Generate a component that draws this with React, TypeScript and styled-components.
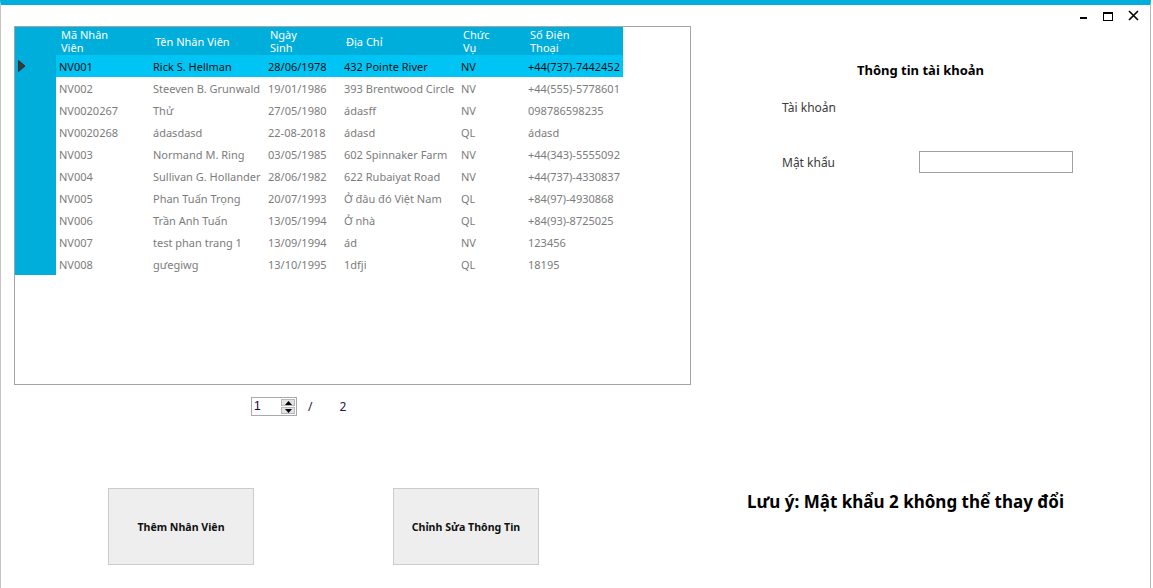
import { Fragment } from 'react'
import styled, { createGlobalStyle } from 'styled-components'

const GlobalStyle = createGlobalStyle`
  html, body {
    margin: 0;
    padding: 0;
    background: #fff;
  }
  body {
    font-family: "Noto Sans", "DejaVu Sans", sans-serif;
  }
`

const BLUE = '#00aedb'
const SELECTED = '#00c5f4'

const Window = styled.div`
  width: 1151px;
  height: 588px;
  box-sizing: border-box;
  border-top: 5px solid ${BLUE};
  border-left: 1px solid #c4c4c4;
  border-right: 1px solid #b4b4b4;
  display: flex;
  background: #fff;
`

const LeftPane = styled.div`
  width: 690px;
  box-sizing: border-box;
  padding-left: 13px;
  display: flex;
  flex-direction: column;
`

const GridBox = styled.div`
  margin-top: 21px;
  width: 677px;
  height: 359px;
  box-sizing: border-box;
  border: 1px solid #a5a5a5;
  background: #fff;
`

const Table = styled.div`
  display: grid;
  width: 608px;
  grid-template-columns: 41px 94px 115px 76px 117px 67px 98px;
  grid-template-rows: 28px;
  grid-auto-rows: 22px;
`

const HeadCell = styled.div`
  background: ${BLUE};
  color: #fff;
  font-size: 11px;
  line-height: 13px;
  padding-left: 5px;
  display: flex;
  align-items: center;
  white-space: nowrap;
`

const RowHead = styled.div`
  background: ${BLUE};
  display: flex;
  align-items: center;
  padding-left: 3px;
`

const Cell = styled.div<{ $selected?: boolean }>`
  background: ${(p) => (p.$selected ? SELECTED : '#fff')};
  color: ${(p) => (p.$selected ? '#111' : '#7c7c7c')};
  font-size: 11px;
  padding-left: 3px;
  display: flex;
  align-items: center;
  white-space: nowrap;
  overflow: hidden;
`

const Pager = styled.div`
  margin-top: 12px;
  margin-left: 237px;
  display: flex;
  align-items: center;
  height: 19px;
`

const SpinBox = styled.div`
  width: 46px;
  height: 19px;
  box-sizing: border-box;
  border: 1px solid #a8a8b0;
  display: flex;
  background: #fff;
`

const SpinValue = styled.div`
  flex: 1;
  font-family: "Liberation Sans", Arial, sans-serif;
  font-size: 12px;
  line-height: 17px;
  padding-left: 2px;
  color: #200030;
`

const SpinButtons = styled.div`
  width: 15px;
  display: flex;
  flex-direction: column;
  gap: 1px;
  padding: 1px 1px 1px 0;
  box-sizing: border-box;
`

const SpinButton = styled.div`
  flex: 1;
  background: #e2e2e2;
  border: 1px solid #b8b8b8;
  display: flex;
  align-items: center;
  justify-content: center;
`

const PagerText = styled.span<{ $gap: number }>`
  margin-left: ${(p) => p.$gap}px;
  font-size: 12px;
  color: #1a1a40;
`

const ButtonRow = styled.div`
  margin-top: 72px;
  margin-left: 94px;
  display: flex;
  gap: 139px;
`

const ActionButton = styled.button`
  width: 146px;
  height: 77px;
  box-sizing: border-box;
  border: 1px solid #cccccc;
  background: #eeeeee;
  font-family: "Noto Sans", "DejaVu Sans", sans-serif;
  font-weight: 700;
  font-size: 10.6px;
  color: #111;
  padding: 0;
`

const RightPane = styled.div`
  width: 459px;
  display: flex;
  flex-direction: column;
`

const Controls = styled.div`
  height: 22px;
  display: flex;
  justify-content: flex-end;
  padding-right: 4px;
`

const ControlButton = styled.div`
  width: 25px;
  height: 22px;
`

const Title = styled.div`
  margin-top: 35px;
  text-align: center;
  font-size: 13px;
  font-weight: 700;
  line-height: 16px;
  color: #000;
`

const FormRow = styled.div<{ $top: number }>`
  margin-top: ${(p) => p.$top}px;
  padding-left: 91px;
  height: 22px;
  display: flex;
  align-items: center;
`

const Label = styled.div`
  width: 137px;
  font-size: 12px;
  color: #3a3a3a;
`

const Input = styled.input`
  width: 154px;
  height: 22px;
  box-sizing: border-box;
  border: 1px solid #a0a0a0;
  margin: 0;
  outline: none;
`

const Note = styled.div`
  margin-top: 318px;
  padding-left: 56px;
  font-size: 17px;
  font-weight: 700;
  line-height: 22px;
  color: #000;
  white-space: nowrap;
`

const headers = [['Mã Nhân', 'Viên'], ['Tên Nhân Viên'], ['Ngày', 'Sinh'], ['Địa Chỉ'], ['Chức', 'Vụ'], ['Số Điện', 'Thoại']]

const rows = [
  ['NV001', 'Rick S. Hellman', '28/06/1978', '432 Pointe River', 'NV', '+44(737)-7442452'],
  ['NV002', 'Steeven B. Grunwald', '19/01/1986', '393 Brentwood Circle', 'NV', '+44(555)-5778601'],
  ['NV0020267', 'Thử', '27/05/1980', 'ádasff', 'NV', '098786598235'],
  ['NV0020268', 'ádasdasd', '22-08-2018', 'ádasd', 'QL', 'ádasd'],
  ['NV003', 'Normand M. Ring', '03/05/1985', '602 Spinnaker Farm', 'NV', '+44(343)-5555092'],
  ['NV004', 'Sullivan G. Hollander', '28/06/1982', '622 Rubaiyat Road', 'NV', '+44(737)-4330837'],
  ['NV005', 'Phan Tuấn Trọng', '20/07/1993', 'Ở đâu đó Việt Nam', 'QL', '+84(97)-4930868'],
  ['NV006', 'Trần Anh Tuấn', '13/05/1994', 'Ở nhà', 'QL', '+84(93)-8725025'],
  ['NV007', 'test phan trang 1', '13/09/1994', 'ád', 'NV', '123456'],
  ['NV008', 'gưegiwg', '13/10/1995', '1dfji', 'QL', '18195'],
]

export default function App() {
  return (
    <>
      <GlobalStyle />
      <Window>
        <LeftPane>
          <GridBox>
            <Table>
              <RowHead />
              {headers.map((h, i) => (
                <HeadCell key={i}>
                  <div>
                    {h.map((line, j) => (
                      <div key={j}>{line}</div>
                    ))}
                  </div>
                </HeadCell>
              ))}
              {rows.map((row, r) => (
                <Fragment key={r}>
                  <RowHead>
                    {r === 0 && (
                      <svg width="8" height="12" viewBox="0 0 8 12">
                        <polygon points="0.5,0.5 7,6 0.5,11.5" fill="#3a3a3a" stroke="#222" strokeWidth="0.8" />
                      </svg>
                    )}
                  </RowHead>
                  {row.map((v, c) => (
                    <Cell key={c} $selected={r === 0}>
                      {v}
                    </Cell>
                  ))}
                </Fragment>
              ))}
            </Table>
          </GridBox>
          <Pager>
            <SpinBox>
              <SpinValue>1</SpinValue>
              <SpinButtons>
                <SpinButton>
                  <svg width="7" height="4" viewBox="0 0 7 4">
                    <polygon points="3.5,0 7,4 0,4" fill="#000" />
                  </svg>
                </SpinButton>
                <SpinButton>
                  <svg width="7" height="4" viewBox="0 0 7 4">
                    <polygon points="0,0 7,0 3.5,4" fill="#000" />
                  </svg>
                </SpinButton>
              </SpinButtons>
            </SpinBox>
            <PagerText $gap={11}>/</PagerText>
            <PagerText $gap={27}>2</PagerText>
          </Pager>
          <ButtonRow>
            <ActionButton>Thêm Nhân Viên</ActionButton>
            <ActionButton>Chỉnh Sửa Thông Tin</ActionButton>
          </ButtonRow>
        </LeftPane>
        <RightPane>
          <Controls>
            <ControlButton>
              <svg width="25" height="22" viewBox="0 0 25 22">
                <rect x="9" y="12" width="7" height="2" fill="#000" />
              </svg>
            </ControlButton>
            <ControlButton>
              <svg width="25" height="22" viewBox="0 0 25 22">
                <rect x="7.5" y="7.5" width="9" height="8" fill="none" stroke="#000" strokeWidth="1" />
                <rect x="7" y="7" width="10" height="2" fill="#000" />
              </svg>
            </ControlButton>
            <ControlButton>
              <svg width="25" height="22" viewBox="0 0 25 22">
                <path d="M8 6 L17 15 M17 6 L8 15" stroke="#000" strokeWidth="1.6" fill="none" />
              </svg>
            </ControlButton>
          </Controls>
          <Title>Thông tin tài khoản</Title>
          <FormRow $top={18}>
            <Label>Tài khoản</Label>
          </FormRow>
          <FormRow $top={33}>
            <Label>Mật khẩu</Label>
            <Input />
          </FormRow>
          <Note>Lưu ý: Mật khẩu 2 không thể thay đổi</Note>
        </RightPane>
      </Window>
    </>
  )
}
